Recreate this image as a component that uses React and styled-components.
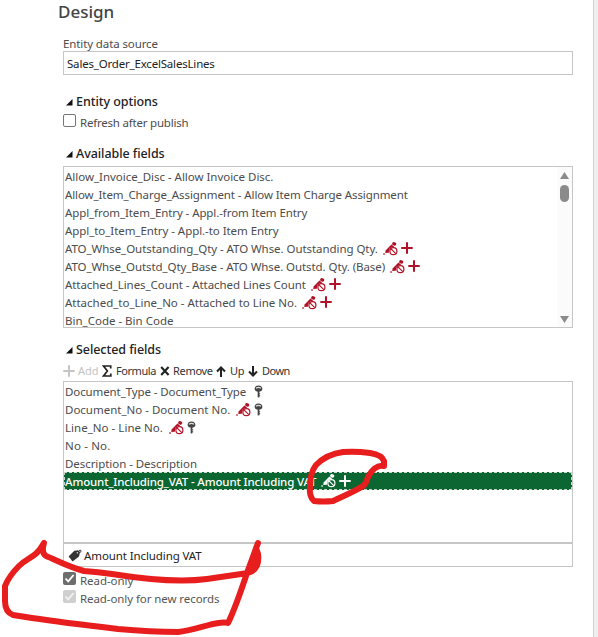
import React from "react";
import styled, { createGlobalStyle } from "styled-components";

const GlobalStyle = createGlobalStyle`
  *, *::before, *::after { box-sizing: border-box; }
  html, body { margin: 0; padding: 0; background: #fff; overflow: hidden; }
`;

const Page = styled.div`
  position: relative;
  display: flex;
  width: 598px;
  height: 637px;
  overflow: hidden;
  background: #fff;
  color: #4c4c4c;
  font: 12px/18px "Noto Sans", "Open Sans", sans-serif;
  white-space: nowrap;
`;
const Panel = styled.main`
  display: flex;
  flex-direction: column;
  width: 593px;
  padding: 0 20px 0 63px;
`;
const Edge = styled.aside`
  width: 5px;
  background: #efefef;
  border-left: 1px solid #d2d2d2;
`;
const Title = styled.h1`
  margin: 0 0 11px -5px;
  height: 24px;
  font-size: 17px;
  line-height: 24px;
  font-weight: 500;
  color: #444;
`;
const Text = styled.span`
  font-size: ${(p) => p.$size || 11.5}px;
  letter-spacing: ${(p) => p.$ls || 0}px;
`;
const Label = styled.label`
  height: 16px;
  line-height: 18px;
`;
const Field = styled.div`
  display: flex;
  align-items: center;
  height: 24px;
  border: 1px solid #c6c6c6;
  padding: 2px 3px 0;
  color: #222;
`;
const TagField = styled(Field)`
  padding: 1px 4px 0;
  gap: 2px;
`;
const SectionTitle = styled.h2`
  display: flex;
  align-items: center;
  gap: 3px;
  height: 18px;
  margin: ${(p) => p.$top}px 0 0 3px;
  font-size: 12px;
  font-weight: 500;
  color: #222;
`;
const CheckRow = styled.div`
  display: flex;
  align-items: center;
  gap: 4px;
  height: 18px;
  margin-top: ${(p) => p.$top || 0}px;
`;
const Box = styled.span`
  display: flex;
  width: 13px;
  height: 13px;
  margin-top: -5px;
  border-radius: 2px;
  border: ${(p) => (p.$fill ? "0" : "1px solid #767676")};
  background: ${(p) => p.$fill || "#fff"};
`;
const List = styled.div`
  display: flex;
  height: 162px;
  margin-top: ${(p) => p.$top}px;
  border: 1px solid #c6c6c6;
  overflow: hidden;
`;
const Rows = styled.div`
  flex: 1;
  min-width: 0;
`;
const Row = styled.div`
  display: flex;
  align-items: center;
  height: 18px;
  padding: 2px 0 0 1px;
`;
const SelectedRow = styled(Row)`
  padding: 1px 0 0;
  border: 1px dashed #c9d8ce;
  background: #0b6632;
  color: #fff;
  font-weight: 500;
`;
const Icons = styled.span`
  display: flex;
  align-items: center;
  gap: 3px;
  height: 16px;
  margin: -2px 0 0 ${(p) => p.$gap || 5}px;
`;
const Scrollbar = styled.div`
  display: flex;
  flex-direction: column;
  align-items: center;
  width: 15px;
  padding-top: 5px;
  background: #fbfbfb;
`;
const Thumb = styled.span`
  width: 9px;
  height: 17px;
  margin: 6px 0 auto;
  border-radius: 5px;
  background: #8b8b8b;
`;
const ScrollArrow = styled.svg`
  display: block;
  margin-bottom: ${(p) => p.$bottom || 0}px;
`;
const Toolbar = styled.div`
  display: flex;
  height: 18px;
  margin-top: 3px;
`;
const Tool = styled.div`
  display: flex;
  flex: none;
  align-items: center;
  gap: ${(p) => p.$gap}px;
  width: ${(p) => p.$w}px;
  color: ${(p) => (p.$off ? "#c4c4c4" : "#333")};
`;
const Checks = styled.div`
  display: flex;
  flex-direction: column;
  margin-top: 5px;
  color: #555;
`;
const Ink = styled.svg`
  position: absolute;
  inset: 0;
  pointer-events: none;
`;

const Caret = () => (
  <svg width="7" height="7" viewBox="0 0 7 7"><path d="M6.5 0V6.5H0Z" fill="#111" /></svg>
);
const Check = ({ color }) => (
  <svg width="13" height="13" viewBox="0 0 13 13"><path d="M2.5 6.5 5.2 9.3 10.6 3" fill="none" stroke={color} strokeWidth="1.8" /></svg>
);
const NoEdit = ({ color = "#b01328" }) => (
  <svg width="15" height="15" viewBox="0 0 15 15" fill="none" stroke={color}>
    <path d="M2.6 9.6 8.4 3.6 11 5.6 5.6 11.8 2.2 12Z" fill={color} stroke="none" />
    <path d="M10.8 2.7 11.6 3.1" strokeWidth="3.4" strokeLinecap="round" />
    <path d="M.4 13.4 1.7 12.6" strokeWidth="1.5" />
    <circle cx="10.4" cy="10.2" r="4.3" fill={color === "#fff" ? "#0b6632" : "#fff"} stroke="none" />
    <circle cx="10.4" cy="10.2" r="3.5" strokeWidth="1.2" />
    <path d="m8 7.8 4.8 4.8" strokeWidth="1.2" />
  </svg>
);
const Plus = ({ color = "#b01328" }) => (
  <svg width="12" height="12" viewBox="0 0 12 12"><path d="M6 .3v11.4M.3 6h11.4" stroke={color} strokeWidth="2" /></svg>
);
const Key = () => (
  <svg width="9" height="13" viewBox="0 0 9 13" fill="none" stroke="#444">
    <path d="M.6 4A3.9 3.5 0 0 1 8.4 4Q8 6.6 4.5 6.8 1 6.6 .6 4Z" fill="#444" stroke="none" />
    <path d="M2 3.3Q4.5 1.4 7 3.3" stroke="#ddd" strokeWidth="1.4" />
    <path d="M4.5 6v6.4" strokeWidth="1.7" />
    <path d="M5 8.8h1.2M5 10.8h1.2" strokeWidth="1" />
  </svg>
);
const Sigma = () => (
  <svg width="10" height="12" viewBox="0 0 10 12"><path d="M8.7 3.4V1H1.5L5.4 6 1.5 11H8.8V8.6" fill="none" stroke="#222" strokeWidth="1.7" /></svg>
);
const Cross = () => (
  <svg width="10" height="10" viewBox="0 0 10 10"><path d="m1.2 1 7.4 8M8.6 1 1.2 9" stroke="#222" strokeWidth="2.1" /></svg>
);
const Arrow = ({ down }) => (
  <svg width="10" height="11" viewBox="0 0 10 11">
    <path d={down ? "M5 0v9.5M1 5.5l4 4 4-4" : "M5 11V1.5M1 5.5l4-4 4 4"} fill="none" stroke="#222" strokeWidth="2" />
  </svg>
);
const Tag = () => (
  <svg width="14" height="13" viewBox="0 0 14 13">
    <path d="M.6 7.4 6.3 1.8 10.2 1.2 12 3.2 11 7.4 4.6 12.4Z" fill="#333" />
    <circle cx="9.4" cy="3.8" r=".8" fill="#fff" />
    <path d="M10 3.5 12.2.9 13.2 2.1 11.6 4" fill="none" stroke="#333" strokeWidth="1" />
  </svg>
);

const available = [
  { text: "Allow_Invoice_Disc - Allow Invoice Disc.", ls: -0.025 },
  { text: "Allow_Item_Charge_Assignment - Allow Item Charge Assignment", ls: -0.1 },
  { text: "Appl_from_Item_Entry - Appl.-from Item Entry", ls: -0.09 },
  { text: "Appl_to_Item_Entry - Appl.-to Item Entry", ls: -0.06 },
  { text: "ATO_Whse_Outstanding_Qty - ATO Whse. Outstanding Qty.", ls: -0.06, edit: true },
  { text: "ATO_Whse_Outstd_Qty_Base - ATO Whse. Outstd. Qty. (Base)", ls: -0.08, edit: true },
  { text: "Attached_Lines_Count - Attached Lines Count", ls: -0.07, edit: true },
  { text: "Attached_to_Line_No - Attached to Line No.", ls: -0.01, edit: true },
  { text: "Bin_Code - Bin Code", ls: 0 },
];
const selected = [
  { text: "Document_Type - Document_Type", ls: -0.1, keyed: true },
  { text: "Document_No - Document No.", ls: 0, edit: true, keyed: true },
  { text: "Line_No - Line No.", ls: 0.03, edit: true, keyed: true },
  { text: "No - No.", ls: 0.15 },
  { text: "Description - Description", ls: -0.06 },
];

export default function App() {
  return (
    <Page>
      <GlobalStyle />
      <Panel>
        <Title>Design</Title>
        <Label><Text $ls={-0.11}>Entity data source</Text></Label>
        <Field><Text $ls={-0.19}>Sales_Order_ExcelSalesLines</Text></Field>
        <SectionTitle $top={18}><Caret /><Text $size={12.5} $ls={-0.06}>Entity options</Text></SectionTitle>
        <CheckRow $top={3}><Box /><Text $ls={-0.21}>Refresh after publish</Text></CheckRow>
        <SectionTitle $top={13}><Caret /><Text $size={12.5} $ls={-0.06}>Available fields</Text></SectionTitle>
        <List $top={3}>
          <Rows>
            {available.map((f) => (
              <Row key={f.text}>
                <Text $ls={f.ls}>{f.text}</Text>
                {f.edit && <Icons><NoEdit /><Plus /></Icons>}
              </Row>
            ))}
          </Rows>
          <Scrollbar>
            <ScrollArrow width="9" height="7" viewBox="0 0 9 7"><path d="M4.5 0 9 7H0Z" fill="#8b8b8b" /></ScrollArrow>
            <Thumb />
            <ScrollArrow $bottom={4} width="9" height="7" viewBox="0 0 9 7"><path d="M4.5 7 9 0H0Z" fill="#8b8b8b" /></ScrollArrow>
          </Scrollbar>
        </List>
        <SectionTitle $top={13}><Caret /><Text $size={12.5} $ls={-0.06}>Selected fields</Text></SectionTitle>
        <Toolbar>
          <Tool $off $w={39} $gap={3}><Plus color="#c4c4c4" /><Text $size={11}>Add</Text></Tool>
          <Tool $w={58} $gap={4}><Sigma /><Text $size={11} $ls={-0.45}>Formula</Text></Tool>
          <Tool $w={56} $gap={3}><Cross /><Text $size={11} $ls={-0.3}>Remove</Text></Tool>
          <Tool $w={32} $gap={4}><Arrow /><Text $size={11} $ls={-0.3}>Up</Text></Tool>
          <Tool $w={50} $gap={4}><Arrow down /><Text $size={11} $ls={-0.5}>Down</Text></Tool>
        </Toolbar>
        <List $top={1}>
          <Rows>
            {selected.map((f) => (
              <Row key={f.text}>
                <Text $ls={f.ls}>{f.text}</Text>
                {(f.edit || f.keyed) && <Icons $gap={f.edit ? 6 : 8}>{f.edit && <NoEdit />}{f.keyed && <Key />}</Icons>}
              </Row>
            ))}
            <SelectedRow>
              <Text $ls={-0.14}>Amount_Including_VAT - Amount Including VAT</Text>
              <Icons><NoEdit color="#fff" /><Plus color="#fff" /></Icons>
            </SelectedRow>
          </Rows>
        </List>
        <TagField><Tag /><Text $ls={-0.1}>Amount Including VAT</Text></TagField>
        <Checks>
          <CheckRow><Box $fill="#6e6e6e"><Check color="#fff" /></Box><Text $ls={-0.06}>Read-only</Text></CheckRow>
          <CheckRow><Box $fill="#cfcfcf"><Check color="#f2f2f2" /></Box><Text $ls={-0.08}>Read-only for new records</Text></CheckRow>
        </Checks>
      </Panel>
      <Edge />
      <Ink width="598" height="637" viewBox="0 0 598 637" fill="none" stroke="#e81e1e" strokeWidth="6" strokeLinecap="round" strokeLinejoin="round">
        <path d="M384 466C377 464 371 471 368 477Q366 484 363 486C354 492 343 496 333 501Q323 502 314 501Q309 497 310 486Q310 473 316 465Q327 454 343 452Q356 451 370 453Q382 455 384 461Z" />
        <path d="M258 543 247 573Q235 609 228 623C219 620 196 630 178 632Q151 632 118 629C84 625 59 622 32 618L13 615Q5 612 5 601V586Q9 576 19 566C28 557 36 558 44 543Q41 553 46 556C56 560 69 567 84 571Q98 572 112 574C137 578 177 583 207 579L248 573Q260 569 258 554L256 548 252 566" />
      </Ink>
    </Page>
  );
}
